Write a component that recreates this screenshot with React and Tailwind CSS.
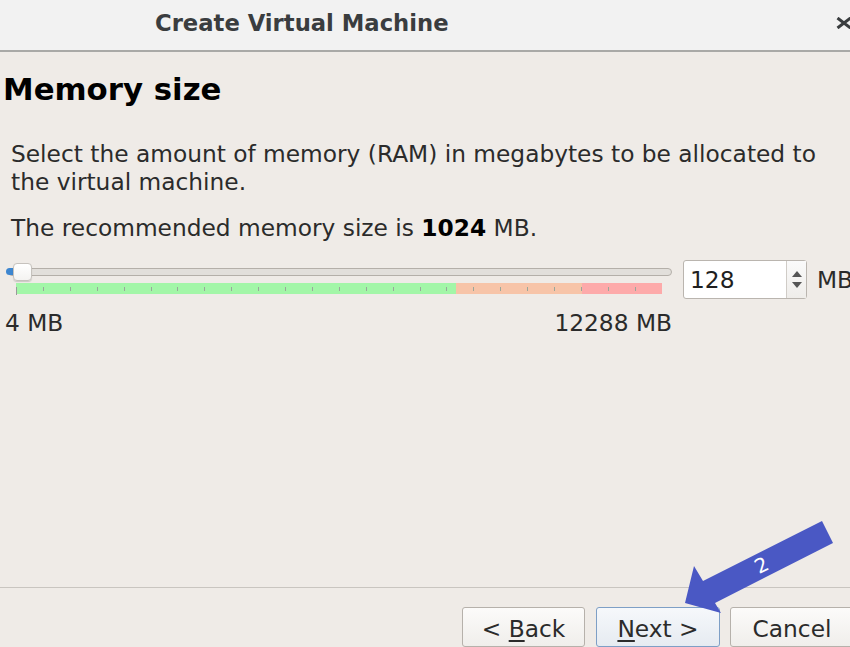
import React from "react";

const TICKS = Array.from({ length: 24 }, (_, i) => Math.round(i * 26.9));

export default function App() {
  return (
    <div className="relative w-[850px] h-[647px] overflow-hidden bg-[#efebe7] flex flex-col font-['DejaVu_Sans',sans-serif] text-[#2b2b2b]">
      {/* Title bar */}
      <div className="h-[52px] shrink-0 bg-[#f2f2f2] border-b-2 border-[#a9a9a7] flex items-center">
        <div className="ml-[155px] text-[22.7px] font-bold text-[#3a3d3f] leading-[26px] pb-[5px]">Create Virtual Machine</div>
        <svg className="ml-auto mr-[-2px] mt-[-5px] shrink-0" width="16" height="12" viewBox="0 0 16 12">
          <path d="M1.5 1 L14.5 11 M14.5 1 L1.5 11" stroke="#3a3d3f" strokeWidth="3" strokeLinecap="butt" />
        </svg>
      </div>

      {/* Content */}
      <div className="mt-[19px] ml-[3px] text-[30.8px] font-bold leading-[36px] text-black">Memory size</div>
      <div className="mt-[33px] ml-[11px] text-[23.3px] leading-[28px]">
        Select the amount of memory (RAM) in megabytes to be allocated to
        <br />
        the virtual machine.
      </div>
      <div className="mt-[18px] ml-[11px] text-[23.3px] leading-[28px]">
        The recommended memory size is <span className="font-bold text-black">1024</span> MB.
      </div>

      {/* Slider row */}
      <div className="mt-[18px] flex items-start">
        <div className="w-[672px] shrink-0 flex flex-col">
          <div className="relative h-[23px]">
            <div className="absolute left-[8px] right-0 top-[8px] h-[8px] rounded-full border border-[#b4afa9] bg-[#e2dfdb]"></div>
            <div className="absolute left-[6px] top-[8px] h-[7px] w-[10px] rounded-l-full bg-[#3d86d0]"></div>
            <div className="absolute left-[13px] top-[3px] h-[18px] w-[19px] rounded-[4px] border border-[#c6c2bd] bg-gradient-to-b from-white to-[#f4f3f1] shadow-[0_1px_1px_rgba(0,0,0,0.15)]"></div>
          </div>
          <div className="relative ml-[16px] w-[646px] h-[11px] flex">
            <div className="w-[440px] h-full bg-[#a3f6a8]"></div>
            <div className="w-[126px] h-full bg-[#f7c4a8]"></div>
            <div className="w-[80px] h-full bg-[#fdaaaa]"></div>
            {TICKS.map((x, i) => (
              <div
                key={i}
                className={i === 0 ? "absolute top-[4px] h-[8px] w-px bg-[#9a9a9a]" : "absolute top-[4px] h-[4px] w-px bg-[#9aa79a]"}
                style={{ left: x }}
              ></div>
            ))}
          </div>
          <div className="mt-[17px] flex justify-between text-[23.3px] leading-[24px]">
            <span className="ml-[5px]">4 MB</span>
            <span>12288 MB</span>
          </div>
        </div>
        <div className="ml-[11px] flex items-center">
          <div className="w-[124px] h-[39px] shrink-0 rounded-[3px] border border-[#bab5af] bg-white flex">
            <div className="flex-1 pl-[6px] text-[23.3px] leading-[37px] text-[#1f1f1f]">128</div>
            <div className="w-[20px] border-l border-[#d0ccc7] bg-gradient-to-b from-[#fafafa] to-[#efedea] flex flex-col items-center justify-center gap-[5px]">
              <svg width="10" height="6" viewBox="0 0 10 6"><path d="M0 6 L5 0 L10 6 Z" fill="#555" /></svg>
              <svg width="10" height="6" viewBox="0 0 10 6"><path d="M0 0 L5 6 L10 0 Z" fill="#555" /></svg>
            </div>
          </div>
          <span className="ml-[10px] text-[23.3px] leading-[24px] whitespace-nowrap">MB</span>
        </div>
      </div>

      <div className="flex-1"></div>

      {/* Footer */}
      <div className="h-px bg-[#c9c5c0] shrink-0"></div>
      <div className="mt-[19px] ml-[462px] flex gap-[11px] shrink-0">
        <button className="w-[123px] h-[40px] shrink-0 rounded-[3px] border border-[#b6b1ab] bg-gradient-to-b from-[#fcfbfa] to-[#f0eeeb] text-[23.3px] leading-[26px] text-[#2b2b2b] pt-[3px]">
          &lt; <u className="underline-offset-[3px]">B</u>ack
        </button>
        <button className="w-[124px] h-[40px] shrink-0 rounded-[3px] border border-[#7e9fc6] bg-gradient-to-b from-[#f6f8fb] to-[#e6ebf1] text-[23.3px] leading-[26px] text-[#2b2b2b] pt-[3px]">
          <u className="underline-offset-[3px]">N</u>ext &gt;
        </button>
        <button className="ml-[-1px] w-[124px] h-[40px] shrink-0 rounded-[3px] border border-[#b6b1ab] bg-gradient-to-b from-[#fcfbfa] to-[#f0eeeb] text-[23.3px] leading-[26px] text-[#2b2b2b] pt-[3px]">
          Cancel
        </button>
      </div>

      {/* Annotation arrow overlay */}
      <svg className="absolute left-0 top-0 pointer-events-none" width="850" height="647" viewBox="0 0 850 647">
        <polygon points="822,521 833,543 715,603 721,613 685,603 694,566 703,581" fill="#4a58c4" />
        <text x="762" y="572" fill="white" fontSize="20" textAnchor="middle" fontFamily="DejaVu Sans, sans-serif" transform="rotate(-27 762 566)">2</text>
      </svg>
    </div>
  );
}
